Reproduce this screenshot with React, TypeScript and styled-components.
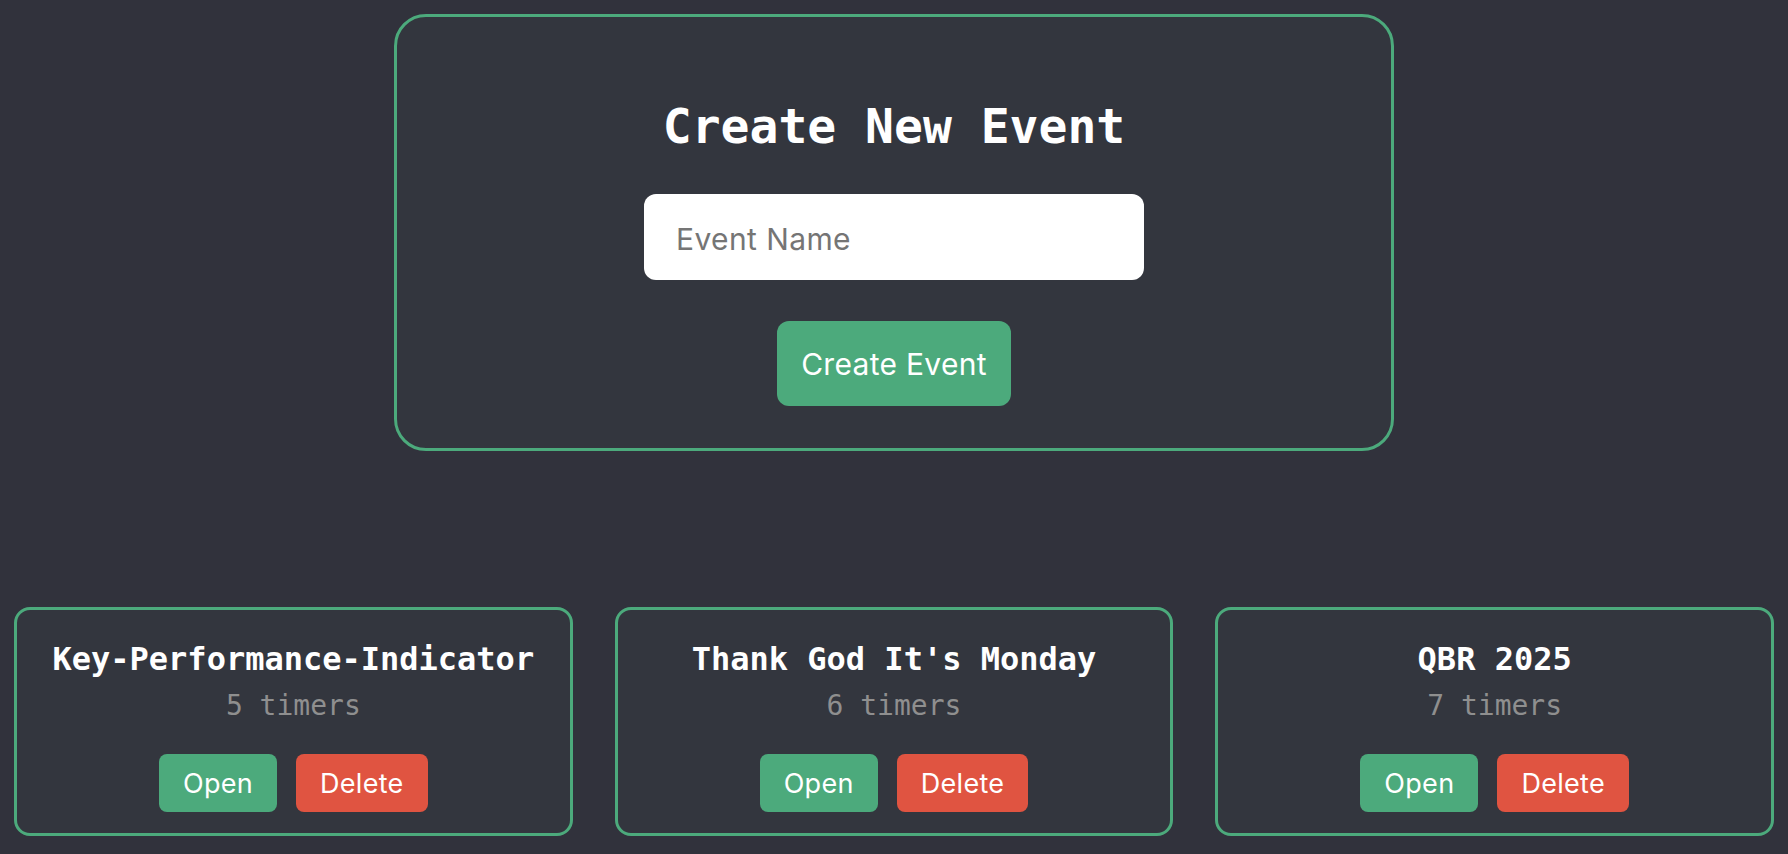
import React from 'react';
import styled, { createGlobalStyle } from 'styled-components';

const GlobalStyle = createGlobalStyle`
  body {
    margin: 0;
    background-color: #31323c;
    font-family: Inter, "Noto Sans", sans-serif;
  }
`;

const events = [
  { name: 'Key-Performance-Indicator', timers: 5 },
  { name: "Thank God It's Monday", timers: 6 },
  { name: 'QBR 2025', timers: 7 },
];

export default function App() {
  return (
    <Page>
      <GlobalStyle />
      <CreateCard>
        <Title>Create New Event</Title>
        <NameInput placeholder="Event Name" />
        <CreateButton>Create Event</CreateButton>
      </CreateCard>
      <EventGrid>
        {events.map((ev) => (
          <EventCard key={ev.name}>
            <EventName>{ev.name}</EventName>
            <TimerCount>{ev.timers} timers</TimerCount>
            <Actions>
              <SmallButton $variant="open">Open</SmallButton>
              <SmallButton $variant="delete">Delete</SmallButton>
            </Actions>
          </EventCard>
        ))}
      </EventGrid>
    </Page>
  );
}

const Page = styled.div`
  min-height: 100vh;
  padding-top: 14px;
  box-sizing: border-box;
`;

const CreateCard = styled.div`
  width: 1000px;
  height: 437px;
  margin: 0 auto;
  box-sizing: border-box;
  background-color: #33363e;
  border: 3px solid #4caa7c;
  border-radius: 32px;
  display: flex;
  flex-direction: column;
  align-items: center;
  padding: 81px 40px 0;
`;

const Title = styled.h1`
  margin: 0 0 40px;
  font-family: "DejaVu Sans Mono", monospace;
  font-weight: bold;
  font-size: 48px;
  line-height: 56px;
  color: #ffffff;
`;

const NameInput = styled.input`
  width: 500px;
  height: 86px;
  box-sizing: border-box;
  border: none;
  border-radius: 12px;
  padding: 3px 32px 0;
  font-family: Inter, "Noto Sans", sans-serif;
  font-size: 30px;
  letter-spacing: 0.4px;
  color: #222;
  background: #fff;
  outline: none;

  &::placeholder {
    color: #757575;
  }
`;

const CreateButton = styled.button`
  margin-top: 41px;
  width: 234px;
  height: 85px;
  padding: 0;
  border: none;
  border-radius: 12px;
  background-color: #4caa7c;
  color: #fff;
  font-family: Inter, "Noto Sans", sans-serif;
  font-size: 30px;
  letter-spacing: 0.3px;
  cursor: pointer;
`;

const EventGrid = styled.div`
  display: grid;
  grid-template-columns: repeat(3, 1fr);
  gap: 42px;
  padding: 0 14px;
  margin-top: 156px;
`;

const EventCard = styled.div`
  height: 229px;
  box-sizing: border-box;
  background-color: #33363e;
  border: 3px solid #4caa7c;
  border-radius: 16px;
  padding: 31px 24px 0;
  display: flex;
  flex-direction: column;
  align-items: center;
`;

const EventName = styled.div`
  font-family: "DejaVu Sans Mono", monospace;
  font-weight: bold;
  font-size: 32px;
  line-height: 37px;
  color: #fff;
`;

const TimerCount = styled.div`
  margin-top: 11px;
  font-family: "DejaVu Sans Mono", monospace;
  font-size: 28px;
  line-height: 33px;
  color: #8f8f8f;
`;

const Actions = styled.div`
  margin-top: 32px;
  display: flex;
  gap: 19px;
`;

const SmallButton = styled.button<{ $variant: 'open' | 'delete' }>`
  height: 58px;
  padding: 0 24px;
  border: none;
  border-radius: 8px;
  background-color: ${(p) => (p.$variant === 'open' ? '#4caa7c' : '#e05441')};
  color: #fff;
  font-family: Inter, "Noto Sans", sans-serif;
  font-size: 27px;
  letter-spacing: 0.3px;
  cursor: pointer;
`;
